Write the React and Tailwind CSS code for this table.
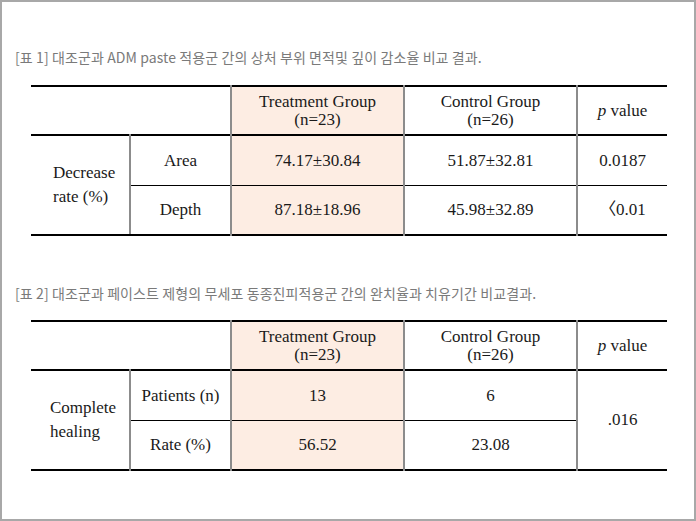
import React from "react";

const cell = "font-['Liberation_Serif','Noto_Sans_CJK_KR',serif] text-[17px] text-[#1a1a1a] font-normal text-center";
const line = "border-l-2 border-[#8c8c8c]";
const peach = "bg-[#fdede3]";

const Caption = ({ children }) => (
  <p className="font-['Noto_Sans_CJK_KR','Noto_Sans',sans-serif] text-[14px] leading-[20px] tracking-[0.1px] text-[#7a7a7a]">
    {children}
  </p>
);

const Header = () => (
  <thead>
    <tr className="h-[49px] border-b-2 border-black">
      <th colSpan={2} className={cell}></th>
      <th className={`${cell} ${peach} ${line} leading-[18px]`}>
        Treatment Group<br />(n=23)
      </th>
      <th className={`${cell} ${line} leading-[18px]`}>
        Control Group<br />(n=26)
      </th>
      <th className={`${cell} ${line}`}>
        <i>p</i> value
      </th>
    </tr>
  </thead>
);

const Cols = () => (
  <colgroup>
    <col className="w-[99px]" />
    <col className="w-[101px]" />
    <col className="w-[173px]" />
    <col className="w-[173px]" />
    <col className="w-[90px]" />
  </colgroup>
);

export default function App() {
  return (
    <div className="w-[696px] h-[521px] border-2 border-[#a8a8a8] bg-white pl-[13px] pt-[45px]">
      <Caption>[표 1] 대조군과 ADM paste 적용군 간의 상처 부위 면적및 깊이 감소율 비교 결과.</Caption>

      <table className="ml-[16px] mt-[18px] w-[636px] table-fixed border-collapse border-t-2 border-b-2 border-black">
        <Cols />
        <Header />
        <tbody>
          <tr className="h-[50px] border-b border-black">
            <td rowSpan={2} className={`${cell} !text-left pl-[22px] leading-[24px] border-b-2 border-black`}>Decrease<br />rate (%)</td>
            <td className={`${cell} ${line}`}>Area</td>
            <td className={`${cell} ${peach} ${line}`}>74.17±30.84</td>
            <td className={`${cell} ${line}`}>51.87±32.81</td>
            <td className={`${cell} ${line}`}>0.0187</td>
          </tr>
          <tr className="h-[50px]">
            <td className={`${cell} ${line}`}>Depth</td>
            <td className={`${cell} ${peach} ${line}`}>87.18±18.96</td>
            <td className={`${cell} ${line}`}>45.98±32.89</td>
            <td className={`${cell} ${line}`}>〈0.01</td>
          </tr>
        </tbody>
      </table>

      <div className="mt-[47px]">
        <Caption>[표 2] 대조군과 페이스트 제형의 무세포 동종진피적용군 간의 완치율과 치유기간 비교결과.</Caption>
      </div>

      <table className="ml-[16px] mt-[17px] w-[636px] table-fixed border-collapse border-t-2 border-b-2 border-black">
        <Cols />
        <Header />
        <tbody>
          <tr className="h-[50px]">
            <td rowSpan={2} className={`${cell} !text-left pl-[19px] leading-[24px]`}>Complete<br />healing</td>
            <td className={`${cell} border-l-2 border-b border-l-[#8c8c8c] border-b-black`}>Patients (n)</td>
            <td className={`${cell} ${peach} border-l-2 border-b border-l-[#8c8c8c] border-b-black`}>13</td>
            <td className={`${cell} border-l-2 border-b border-l-[#8c8c8c] border-b-black`}>6</td>
            <td rowSpan={2} className={`${cell} ${line}`}>.016</td>
          </tr>
          <tr className="h-[50px]">
            <td className={`${cell} ${line}`}>Rate (%)</td>
            <td className={`${cell} ${peach} ${line}`}>56.52</td>
            <td className={`${cell} ${line}`}>23.08</td>
          </tr>
        </tbody>
      </table>
    </div>
  );
}
